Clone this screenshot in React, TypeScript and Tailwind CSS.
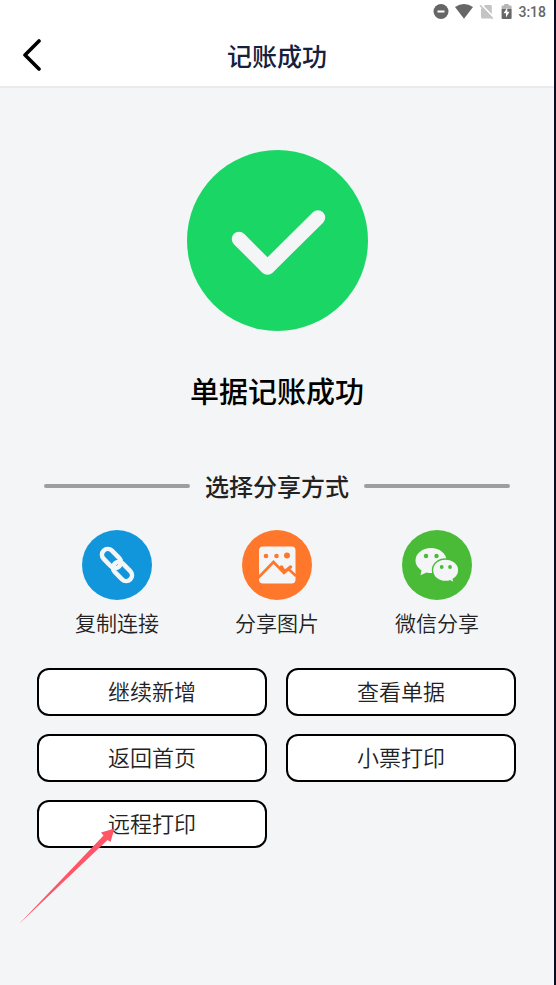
import type { ReactNode } from "react";

const actions = ["继续新增", "查看单据", "返回首页", "小票打印", "远程打印"];

function StatusBar() {
  return (
    <div className="flex h-6 items-center justify-end pr-2 text-[#666666]">
      <svg className="mr-[6px] size-4" viewBox="0 0 16 16" aria-hidden="true">
        <circle cx="8" cy="7.5" r="7.5" fill="currentColor" />
        <path d="M4.5 7.5h7" stroke="#fff" strokeWidth="2" />
      </svg>
      <svg className="mr-[6px] h-4 w-[18px]" viewBox="0 0 18 16" aria-hidden="true">
        <path d="M0 3Q9-3 18 3L9 14.800Z" fill="currentColor" />
      </svg>
      <svg className="mr-[8px] h-4 w-[14px]" viewBox="0 0 14 16" aria-hidden="true">
        <path d="M6 1H11.500Q12.800 1 12.800 2.300V14.500H3.500Q2 14.500 2 13V5Z" fill="#c4c4c4" />
        <path d="M2.500 .8L14.500 13" stroke="#fff" strokeWidth="1.800" />
        <path d="M1 1.200L13.700 14.600" stroke="#c4c4c4" strokeWidth="1.600" />
      </svg>
      <svg className="mr-[6px] h-4 w-[11px]" viewBox="0 0 11 16" aria-hidden="true">
        <path d="M3.2 0h4.4v1.6h2q1 0 1 1V5H.6V2.6q0-1 1-1h1.6Z" fill="#b5b5b5" />
        <path d="M.6 5h10v8.900q0 1-1 1h-8q-1 0-1-1Z" fill="currentColor" />
        <path d="M6.3 3.5L2.6 9.2H5V13.4L8.5 7.8H6.3Z" fill="#fff" />
      </svg>
      <span className="font-[Roboto,sans-serif] text-[14px] leading-6 font-medium">3:18</span>
    </div>
  );
}

function Share({ label, color, children }: { label: string; color: string; children: ReactNode }) {
  return (
    <button type="button" className="flex flex-col items-center gap-[6px] text-[21px] leading-8 font-[350] text-[#222222]">
      <svg className={`size-[70px] ${color}`} viewBox="0 0 70 70" aria-hidden="true">
        <circle cx="35" cy="35" r="35" fill="currentColor" />
        {children}
      </svg>
      {label}
    </button>
  );
}

export default function App() {
  return (
    <div className="relative flex min-h-screen flex-col border-r-2 border-[#080b25] bg-[#f3f5f7] font-['Noto_Sans_CJK_SC',sans-serif]">
      <header className="border-b-2 border-[#e9eaeb] bg-white">
        <StatusBar />
        <div className="grid h-[62px] grid-cols-[64px_1fr_64px] items-center">
          <button type="button" aria-label="返回" className="flex h-full items-center pl-[22px]">
            <svg className="h-8 w-5" viewBox="0 0 20 32" fill="none" stroke="#000" strokeWidth="3.6" strokeLinecap="round" strokeLinejoin="round" aria-hidden="true">
              <path d="M17 2L3 16L17 30" />
            </svg>
          </button>
          <h1 className="text-center text-[25px] leading-9 font-medium text-[#16213d]">记账成功</h1>
        </div>
      </header>

      <main className="flex flex-col pt-[62px]">
        <svg className="size-[181px] self-center" viewBox="0 0 181 181" aria-hidden="true">
          <circle cx="90.5" cy="90.5" r="90.5" fill="#1ad665" />
          <path d="M52 89L80.500 117.500L131 67.500" fill="none" stroke="#f3f5f7" strokeWidth="14.5" strokeLinecap="round" strokeLinejoin="round" />
        </svg>
        <h2 className="mt-[39px] text-center text-[29px] leading-10 font-medium text-black">单据记账成功</h2>

        <div className="mx-11 mt-[58px] flex items-center gap-[15px]">
          <span className="h-1 flex-1 rounded-full bg-[#9e9e9e]" />
          <h3 className="text-[24px] leading-9 font-medium text-[#222222]">选择分享方式</h3>
          <span className="h-1 flex-1 rounded-full bg-[#9e9e9e]" />
        </div>

        <div className="mx-[37px] mt-[26px] grid grid-cols-3">
          <Share label="复制连接" color="text-[#1296db]">
            <g fill="none" stroke="#f3f5f7" strokeWidth="4.600">
              <rect x="-11" y="-5.800" width="22" height="11.600" rx="5.800" transform="translate(29.500 28.500) rotate(45)" />
              <rect x="-11" y="-5.800" width="22" height="11.600" rx="5.800" transform="translate(40.500 41.500) rotate(45)" />
            </g>
          </Share>
          <Share label="分享图片" color="text-[#ff772a]">
            <rect x="17" y="16.500" width="36.500" height="37" rx="4" fill="#f3f5f7" />
            <g fill="currentColor">
              <circle cx="24" cy="26" r="2.300" />
              <circle cx="34.500" cy="26" r="2.300" />
              <circle cx="45" cy="25.500" r="3" />
              <circle cx="39.500" cy="37" r="1.800" />
              <circle cx="48.500" cy="37" r="1.700" />
            </g>
            <path d="M16 48L31.500 32L42 43L46.500 39L54 46M39.500 37L43 41L48 37" fill="none" stroke="currentColor" strokeWidth="2.600" />
          </Share>
          <Share label="微信分享" color="text-[#49bb36]">
            <path d="M29 18C20.500 18 13.500 23.500 13.500 30.500C13.500 34.500 16 38 19.500 40.300L18.500 45.200L24.500 42.500Q27 43.200 31 43C37 43 44.500 38 44.500 30.500C44.500 23.500 37.500 18 29 18Z" fill="#f3f5f7" />
            <path d="M43.500 29C36 29 30.500 34 30.500 40.200C30.500 46.500 36 51.500 43.500 51.500Q46 51.500 48 50.800L52.300 53L51.300 49.200C54.500 47.200 56.800 44 56.800 40.200C56.800 34 51 29 43.500 29Z" fill="#f3f5f7" stroke="currentColor" strokeWidth="1.400" />
            <g fill="currentColor">
              <circle cx="24" cy="26" r="2.200" />
              <circle cx="34.500" cy="26" r="2.200" />
              <circle cx="39.700" cy="37" r="1.900" />
              <circle cx="48" cy="37" r="1.900" />
            </g>
          </Share>
        </div>

        <div className="mr-[38px] ml-[37px] mt-[30px] grid grid-cols-2 gap-x-[19px] gap-y-[18px]">
          {actions.map((label) => (
            <button key={label} type="button" className="h-12 rounded-xl border-2 border-black bg-white pb-1 text-[22px] leading-8 font-[350] text-[#222222]">
              {label}
            </button>
          ))}
        </div>
      </main>

      {/* Pointer laid over the remote-print button */}
      <svg className="pointer-events-none absolute top-[828px] left-[19px] h-[97px] w-24" viewBox="0 0 96 97" aria-hidden="true">
        <path d="M0 96L84.500 7.500L82 4.500L95.500 .5L91.500 14L88.500 12Z" fill="#ff5566" />
      </svg>
    </div>
  );
}
